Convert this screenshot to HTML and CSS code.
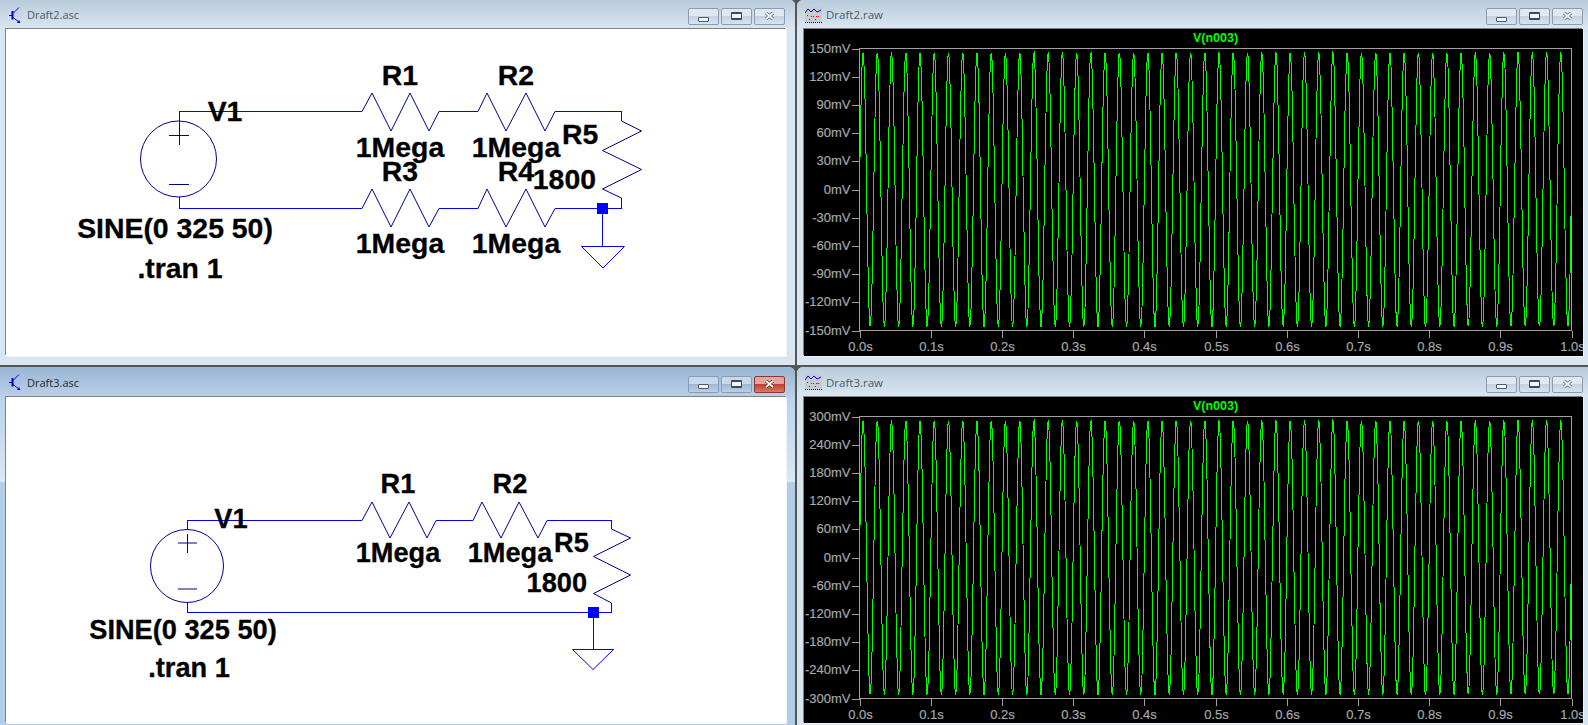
FILE: index.html
```html
<!DOCTYPE html>
<html lang="en">
<head>
    <meta charset="UTF-8">
    <title>LTspice - Draft2 / Draft3</title>
    <link rel="stylesheet" href="styles.css">
</head>
<body>
    <div class="desktop">
        <!-- Draft2 schematic -->
        <div class="window left">
            <div class="titlebar">
                <svg class="app-icon" viewBox="0 0 12 16"><path d="M0 8.500H3" /><path class="bar" d="M3.500 4V12.500" /><path d="M4 6.500L10 0.500M4 10.500L10 15" /><path class="head" d="M11.500 16H8L10 13Z" /></svg>
                <span class="title">Draft2.asc</span>
                <div class="buttons">
                    <div class="btn"><span class="ico-min"></span></div>
                    <div class="btn"><span class="ico-max"></span></div>
                    <div class="btn"><svg class="ico-close" viewBox="0 0 11 8"><path class="o" d="M2 1L9 7M9 1L2 7" /><path class="i" d="M2 1L9 7M9 1L2 7" /></svg></div>
                </div>
            </div>
            <div class="client schematic">
                <svg class="canvas" width="780" height="327" viewBox="6 29 780 327">
                    <g class="wire">
                        <path d="M179.500 139V111.500H362M439 111.500H478M555 111.500H621.500V121" />
                        <path d="M179.500 197V208.500H362M439 208.500H478M555 208.500H621.500V198" />
                        <path d="M602.500 208.500V246" />
                    </g>
                    <g class="sym">
                        <circle cx="178.500" cy="159" r="38" />
                        <path d="M169 135.500H189M179.500 126V145M169 184.500H189" />
                        <path d="M362 111.500L372 93L391 131L410 93L429 131L439 111.500" />
                        <path d="M478 111.500L487 93L506 131L526 93L545 131L555 111.500" />
                        <path d="M362 208.500L372 189L391 227L410 189L429 227L439 208.500" />
                        <path d="M478 208.500L487 189L506 227L526 189L545 227L555 208.500" />
                        <path d="M621.500 121L641.500 131L602.500 150.500L641.500 169.500L602.500 189L621.500 198" />
                    </g>
                    <path class="gnd" d="M581.500 246.500H624.500L603 268Z" />
                    <rect class="node" x="597" y="203" width="11" height="11" />
                    <g class="lbl">
                        <text x="225" y="121" text-anchor="middle">V1</text>
                        <text x="400" y="85" text-anchor="middle">R1</text>
                        <text x="516" y="85" text-anchor="middle">R2</text>
                        <text x="400" y="157" text-anchor="middle">1Mega</text>
                        <text x="516" y="157" text-anchor="middle">1Mega</text>
                        <text x="400" y="181" text-anchor="middle">R3</text>
                        <text x="516" y="181" text-anchor="middle">R4</text>
                        <text x="562" y="144">R5</text>
                        <text x="596" y="189" text-anchor="end">1800</text>
                        <text x="400" y="252.500" text-anchor="middle">1Mega</text>
                        <text x="516" y="252.500" text-anchor="middle">1Mega</text>
                        <text x="175" y="238" text-anchor="middle">SINE(0 325 50)</text>
                        <text x="180" y="278" text-anchor="middle">.tran 1</text>
                    </g>
                </svg>
            </div>
        </div>

        <!-- Draft2 waveform -->
        <div class="window right">
            <div class="titlebar">
                <svg class="app-icon wide" viewBox="0 0 17 16"><rect class="i-bg" width="17" height="15" /><path class="i-blue" d="M0 6L3 2L6 5L9 2L12 5L16 3" /><path class="i-red" d="M2 8.500H4M6 9.500H9M11 9.500H14" /><path class="i-dot" d="M4 12.500H5M10 12.500H11" /><path class="i-k" d="M0 15.500H17" /></svg>
                <span class="title">Draft2.raw</span>
                <div class="buttons">
                    <div class="btn"><span class="ico-min"></span></div>
                    <div class="btn"><span class="ico-max"></span></div>
                    <div class="btn"><svg class="ico-close" viewBox="0 0 11 8"><path class="o" d="M2 1L9 7M9 1L2 7" /><path class="i" d="M2 1L9 7M9 1L2 7" /></svg></div>
                </div>
            </div>
            <div class="client scope">
                <svg class="canvas plot" data-peak="146" data-max="150" data-step="30" width="779" height="327" viewBox="804 29 779 327"></svg>
            </div>
        </div>

        <!-- Draft3 schematic -->
        <div class="window left active">
            <div class="titlebar">
                <svg class="app-icon" viewBox="0 0 12 16"><path d="M0 8.500H3" /><path class="bar" d="M3.500 4V12.500" /><path d="M4 6.500L10 0.500M4 10.500L10 15" /><path class="head" d="M11.500 16H8L10 13Z" /></svg>
                <span class="title">Draft3.asc</span>
                <div class="buttons">
                    <div class="btn"><span class="ico-min"></span></div>
                    <div class="btn"><span class="ico-max"></span></div>
                    <div class="btn red"><svg class="ico-close" viewBox="0 0 11 8"><path class="o" d="M2 1L9 7M9 1L2 7" /><path class="i" d="M2 1L9 7M9 1L2 7" /></svg></div>
                </div>
            </div>
            <div class="client schematic">
                <svg class="canvas" width="780" height="326" viewBox="6 397 780 326">
                    <g class="wire">
                        <path d="M187.500 529V520.500H362M436 520.500H473M547 520.500H611.500V529" />
                        <path d="M187.500 602V612.500H611.500V603" />
                        <path d="M593.500 612.500V649" />
                    </g>
                    <g class="sym">
                        <circle cx="187" cy="566" r="36.500" />
                        <path d="M178 543H197M187.500 534V553M178 589H197" />
                        <path d="M362 520.500L372 502L390 538L409 502L427 538L436 520.500" />
                        <path d="M473 520.500L482 502L501 538L519 502L538 538L547 520.500" />
                        <path d="M611.500 529L630.500 538L593.500 556.500L630.500 575L593.500 593.500L611.500 603" />
                    </g>
                    <path class="gnd" d="M572.500 649.500H613.500L593 669.500Z" />
                    <rect class="node" x="588" y="607" width="11" height="11" />
                    <g class="lbl small">
                        <text x="231" y="528" text-anchor="middle">V1</text>
                        <text x="398" y="493" text-anchor="middle">R1</text>
                        <text x="510" y="493" text-anchor="middle">R2</text>
                        <text x="398" y="562" text-anchor="middle">1Mega</text>
                        <text x="510" y="562" text-anchor="middle">1Mega</text>
                        <text x="554" y="551.500">R5</text>
                        <text x="587" y="592" text-anchor="end">1800</text>
                        <text x="183" y="639" text-anchor="middle">SINE(0 325 50)</text>
                        <text x="189" y="677" text-anchor="middle">.tran 1</text>
                    </g>
                </svg>
            </div>
        </div>

        <!-- Draft3 waveform -->
        <div class="window right">
            <div class="titlebar">
                <svg class="app-icon wide" viewBox="0 0 17 16"><rect class="i-bg" width="17" height="15" /><path class="i-blue" d="M0 6L3 2L6 5L9 2L12 5L16 3" /><path class="i-red" d="M2 8.500H4M6 9.500H9M11 9.500H14" /><path class="i-dot" d="M4 12.500H5M10 12.500H11" /><path class="i-k" d="M0 15.500H17" /></svg>
                <span class="title">Draft3.raw</span>
                <div class="buttons">
                    <div class="btn"><span class="ico-min"></span></div>
                    <div class="btn"><span class="ico-max"></span></div>
                    <div class="btn"><svg class="ico-close" viewBox="0 0 11 8"><path class="o" d="M2 1L9 7M9 1L2 7" /><path class="i" d="M2 1L9 7M9 1L2 7" /></svg></div>
                </div>
            </div>
            <div class="client scope">
                <svg class="canvas plot" data-peak="292" data-max="300" data-step="60" width="779" height="326" viewBox="804 397 779 326"></svg>
            </div>
        </div>

        <span class="joint joint-top"></span>
        <span class="joint joint-mid"></span>
    </div>
    <script src="plot.js"></script>
</body>
</html>
```

FILE: styles.css
```css
html, body {
    margin: 0;
    height: 100%;
    overflow: hidden;
}
body {
    font-family: "Liberation Sans", sans-serif;
    background-color: #555;
}
.desktop {
    position: relative;
    display: grid;
    grid-template-columns: 795px 791px;
    grid-template-rows: 365px 358px;
    gap: 2px;
    width: 1588px;
    height: 725px;
}
.joint {
    position: absolute;
    left: 792px;
    width: 0;
    height: 0;
    border-left: 4px solid transparent;
    border-right: 4px solid transparent;
    border-top: 4px solid #555;
}
.joint-top { top: 0; }
.joint-mid { top: 366px; }

.window {
    display: flex;
    flex-direction: column;
    background-color: #d9e5f1;
    overflow: hidden;
}
.window.right {
    border-radius: 6px 0 0 0;
}
.window.left.active {
    border-radius: 0 6px 0 0;
    background: linear-gradient(#b9d2ec 8%, #dae7f4 32%, #b3cde8 32.300%);
}
.titlebar {
    display: flex;
    align-items: center;
    flex: 0 0 29px;
    padding: 0 10px 0 9px;
    background: linear-gradient(#b9cbdc, #dbe6f1);
}
.window:nth-child(n+3) .titlebar {
    flex-basis: 30px;
}
.right .titlebar {
    padding: 0 5px 0 8px;
}
.active .titlebar {
    background: linear-gradient(#9ab6d3, #bad0e7);
}
.title {
    margin-left: 6px;
    font-family: "Open Sans", sans-serif;
    font-size: 11px;
    color: #4e5a66;
}
.right .title {
    margin-left: 3px;
    font-size: 11.500px;
}
.active .title {
    color: #1c2733;
}
.app-icon {
    width: 12px;
    height: 16px;
    fill: none;
    stroke: #0000e0;
    stroke-width: 1;
}
.app-icon .bar {
    stroke-width: 2;
}
.app-icon .head {
    fill: #0000e0;
    stroke: none;
}
.app-icon.wide {
    width: 17px;
    height: 16px;
    margin-right: 1px;
}
.i-bg { fill: #c6ccd2; stroke: none; }
.i-red { stroke: #e00000; stroke-dasharray: 1 1; }
.i-dot { stroke: #2020d0; }
.i-k { stroke: #000; stroke-dasharray: 1 1; }
.buttons {
    display: flex;
    gap: 2px;
    margin-left: auto;
    margin-top: 4px;
}
.btn {
    display: flex;
    align-items: center;
    justify-content: center;
    width: 29px;
    height: 15px;
    border: 1px solid #8a9cb4;
    border-radius: 2px;
    background: linear-gradient(#dfe8f2 45%, #c3d3e4 50%, #d7e3ef);
}
.active .btn {
    background: linear-gradient(#c7d8ea 45%, #9fb8d3 50%, #bcd0e6);
}
.btn.red {
    border-color: #8b3a32;
    background: linear-gradient(#e0a59c 45%, #c0402f 50%, #d77a6a);
}
.ico-min {
    width: 9px;
    height: 3px;
    margin-top: 5px;
    border: 1px solid #4c5a6c;
    border-radius: 1px;
    background-color: #f2f4f6;
}
.ico-max {
    width: 9px;
    height: 4px;
    margin-top: -1px;
    border: 1px solid #3c4a5c;
    border-width: 2px 1px;
    border-radius: 1px;
    background-color: #f2f4f6;
}
.ico-close {
    width: 11px;
    height: 8px;
    margin-top: -1px;
    fill: none;
}
.ico-close .o {
    stroke: #66768a;
    stroke-width: 3.500;
}
.ico-close .i {
    stroke: #f2f4f6;
    stroke-width: 1.800;
}
.red .ico-close .o {
    stroke: #7a2a20;
}
.red .ico-close .i {
    stroke: #fff;
}
.client {
    flex: 1;
    min-height: 0;
    margin: 0 9px 9px 6px;
    box-shadow: -1px -1px 0 #808080, 1px 1px 0 #f2f5f8;
}
.window:nth-child(n+3) .client {
    margin-bottom: 2px;
}
.right .client {
    margin-left: 7px;
    margin-right: 5px;
}
.schematic {
    background-color: #fff;
}
.scope {
    background-color: #000;
}
.canvas {
    display: block;
}
.wire path {
    fill: none;
    stroke: #0000ff;
    stroke-width: 1;
    shape-rendering: crispEdges;
}
.sym path, .sym circle {
    fill: none;
    stroke: #000090;
    stroke-width: 1;
}
.gnd {
    fill: none;
    stroke: #0000ff;
    stroke-width: 1;
}
.node {
    fill: #0000ff;
}
.lbl text {
    font-family: "Liberation Sans", sans-serif;
    font-weight: bold;
    font-size: 28.400px;
    fill: #000;
    stroke: #000;
    stroke-width: 0.300;
}
.lbl.small text {
    font-size: 27.200px;
}
.frame, .tick {
    fill: none;
    stroke: #a0a0a0;
    stroke-width: 1;
    shape-rendering: crispEdges;
}
.trace {
    fill: none;
    stroke: #00ff00;
    stroke-width: 1;
    shape-rendering: crispEdges;
}
.axis-label {
    font-family: "Liberation Sans", sans-serif;
    font-size: 13px;
    fill: #a4a8ac;
    stroke: #a4a8ac;
    stroke-width: 0.200;
}
.trace-name {
    font-family: "Liberation Sans", sans-serif;
    font-size: 12.500px;
    font-weight: bold;
    fill: #00ff00;
}
```

FILE: plot.js
```js
// draws the LTspice waveform panes from the data- attributes on each svg
var NS = 'http://www.w3.org/2000/svg';
var LEFT = 859.5, RIGHT = 1571.5;

function add(svg, tag, attrs, text) {
    var el = document.createElementNS(NS, tag);
    for (var k in attrs) el.setAttribute(k, attrs[k]);
    if (text) el.textContent = text;
    svg.appendChild(el);
}

document.querySelectorAll('.plot').forEach(function (svg) {
    var box = svg.getAttribute('viewBox').split(' ').map(Number);
    var top = box[1] + 19.5;
    var bottom = top + 282;
    var max = +svg.dataset.max, step = +svg.dataset.step, peak = +svg.dataset.peak;
    var mid = (top + bottom) / 2;

    add(svg, 'rect', { 'class': 'frame', x: LEFT, y: top, width: RIGHT - LEFT, height: bottom - top });
    add(svg, 'text', { 'class': 'trace-name', x: (LEFT + RIGHT) / 2, y: top - 7, 'text-anchor': 'middle' }, 'V(n003)');

    // y axis
    for (var v = max; v >= -max; v -= step) {
        var y = Math.round(mid - v / max * 141) + 0.5;
        add(svg, 'path', { 'class': 'tick', d: 'M' + (LEFT - 8) + ' ' + y + 'H' + LEFT });
        add(svg, 'text', { 'class': 'axis-label', x: LEFT - 9, y: y + 3.5, 'text-anchor': 'end' }, v + 'mV');
    }

    // x axis
    for (var i = 0; i <= 10; i++) {
        var x = Math.round(LEFT + i * 71.2) + 0.5;
        add(svg, 'path', { 'class': 'tick', d: 'M' + x + ' ' + bottom + 'v7' });
        add(svg, 'text', { 'class': 'axis-label', x: x, y: bottom + 20, 'text-anchor': 'middle' }, (i / 10).toFixed(1) + 's');
    }

    // sine at 50 Hz, 1 s, sampled coarsely like the solver's time steps
    var pts = [];
    for (var t = 0; t <= 1; t += 0.00087) {
        var px = LEFT + t * (RIGHT - LEFT);
        var py = mid - Math.sin(2 * Math.PI * 50 * t) * peak / max * 141;
        pts.push(px.toFixed(1) + ',' + py.toFixed(1));
    }
    add(svg, 'polyline', { 'class': 'trace', points: pts.join(' ') });
});
```
